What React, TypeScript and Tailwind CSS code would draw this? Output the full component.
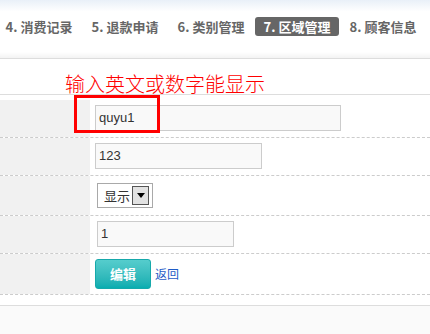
import React from "react";

const tabs = [
  { label: "4. 消费记录", active: false },
  { label: "5. 退款申请", active: false },
  { label: "6. 类别管理", active: false },
  { label: "7. 区域管理", active: true },
  { label: "8. 顾客信息", active: false },
];

const Cell = ({ h, children }: { h: string; children?: React.ReactNode }) => (
  <div className={`flex border-b border-dashed border-[#cccccc] ${h}`}>
    <div className="w-[90px] shrink-0 bg-[#f1f1f1]" />
    <div className="flex-1 pl-[5px] pt-[5px]">{children}</div>
  </div>
);

const App = () => {
  return (
    <div
      className="relative w-[430px] h-[334px] overflow-hidden bg-white flex flex-col"
      style={{ fontFamily: '"Liberation Sans", "Noto Sans CJK SC", sans-serif' }}
    >
      {/* tab bar */}
      <div className="h-[59px] shrink-0 border-b border-[#dddddd] bg-gradient-to-b from-[#e9f0f8] via-white via-[20%] to-white relative">
        <div className="flex gap-[2px] ml-[-3px] pt-[17px]">
          {tabs.map((t) => (
            <div
              key={t.label}
              className={`w-[84px] h-[19px] flex items-center justify-center rounded-[3px] text-[13px] font-bold leading-none whitespace-nowrap ${
                t.active ? "bg-[#666666] text-white" : "text-[#666666]"
              }`}
              style={{ fontFamily: '"Noto Sans CJK SC", sans-serif' }}
            >
              {t.label}
            </div>
          ))}
        </div>
        <div className="absolute left-0 right-0 bottom-0 h-[6px] bg-gradient-to-b from-white to-[#f3f3f3]" />
      </div>

      {/* annotation text */}
      <div className="h-[35px] shrink-0 relative">
        <p
          className="absolute left-[65px] top-[13px] text-[20px] leading-[24px] text-[#ff0000] whitespace-nowrap"
          style={{ fontFamily: '"Noto Sans CJK SC", sans-serif', fontWeight: 300 }}
        >
          输入英文或数字能显示
        </p>
      </div>

      {/* form table */}
      <div className="border-t border-[#dddddd] pt-[5px] shrink-0">
        <Cell h="h-[38px]">
          <div className="w-[246px] h-[26px] border border-[#cccccc] bg-[#f9f9f9] flex items-center pl-[3px] text-[13px] text-[#333333]">
            quyu1
          </div>
        </Cell>
        <Cell h="h-[38px]">
          <div className="w-[167px] h-[26px] border border-[#cccccc] bg-[#f9f9f9] flex items-center pl-[3px] text-[13px] text-[#333333]">
            123
          </div>
        </Cell>
        <Cell h="h-[40px]">
          <div className="ml-[2px] mt-[2px] w-[56px] h-[25px] border border-[#a9a9a9] bg-white flex items-center pl-[6px] pr-[3px] justify-between">
            <span
              className="text-[13px] text-[#333333] leading-none"
              style={{ fontFamily: '"Noto Sans CJK SC", sans-serif' }}
            >
              显示
            </span>
            <span className="w-[17px] h-[19px] border border-[#555555] bg-[#e2e2e2] flex items-center justify-center">
              <svg width="8" height="5" viewBox="0 0 8 5">
                <path d="M0 0 L8 0 L4 5 Z" fill="#000" />
              </svg>
            </span>
          </div>
        </Cell>
        <Cell h="h-[38px]">
          <div className="ml-[2px] w-[137px] h-[26px] border border-[#cccccc] bg-[#f9f9f9] flex items-center pl-[3px] text-[13px] text-[#333333]">
            1
          </div>
        </Cell>
        <Cell h="h-[41px]">
          <div className="flex items-center gap-[4px]">
            <button
              className="w-[56px] h-[30px] rounded-[3px] border border-[#16a9ab] bg-gradient-to-b from-[#55cdcd] to-[#06adb0] text-white text-[13px] font-bold"
              style={{ fontFamily: '"Noto Sans CJK SC", sans-serif' }}
            >
              编辑
            </button>
            <a
              className="text-[12px] text-[#1e5bc6] cursor-pointer"
              style={{ fontFamily: '"Noto Sans CJK SC", sans-serif' }}
            >
              返回
            </a>
          </div>
        </Cell>
      </div>

      {/* footer band */}
      <div className="mt-[10px] border-t border-[#dddddd] bg-[#fafafa] flex-1" />

      {/* red highlight box */}
      <div className="absolute left-[74px] top-[95px] w-[86px] h-[38px] border-[3px] border-[#ff0000]" />
    </div>
  );
};

export default App;
